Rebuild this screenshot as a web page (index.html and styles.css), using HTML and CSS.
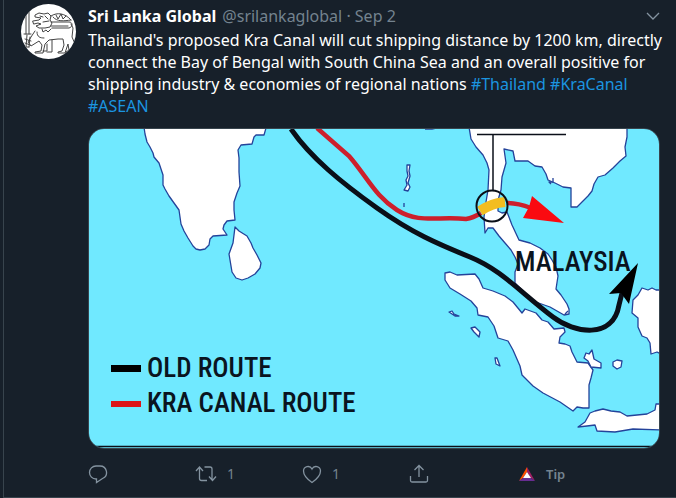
FILE: index.html
```html
<!DOCTYPE html>
<html lang="en">
<head>
<meta charset="utf-8">
<meta name="viewport" content="width=device-width, initial-scale=1">
<title>Sri Lanka Global</title>
<link rel="stylesheet" href="styles.css">
</head>
<body>
<article class="tweet">
  <a class="avatar" href="#" aria-label="Sri Lanka Global">
    <svg viewBox="0 0 55 55" fill="none" stroke="#444" stroke-width="1" stroke-linecap="round" stroke-linejoin="round">
      <path d="M5 8v22M8 8v22M3 30h7M6 31l-1 12M9 33l-1 10M4 35l6 2M4 39l5 2M5 43h3"/>
      <path d="M12 17l6-1 2-2-6-1 0-2 4-2 5 1 4-1 3 3-1 4 2 3-2 4-5 1-6 0-3-2 5-2-3-1-4 1zM19 12l3 1M24 12l3 3M22 18l6-1M21 25l1 3 3-2 2 2 3-3"/>
      <path d="M30 12c6-4 14-3 20 4M32 13c4 5 11 4 18 3M35 11l2 4 3-5 2 5 3-3M30 18h18c4 0 4 5 0 6H31M30 22h17"/>
      <path d="M14 27l-4 6-3 5 3 4 8-5 3 4-1 6-6 1v1h8l2-9 4-4 9-1 5 0 1 6-2 6-4 1v1h7l3-9 1 6-3 2v1h8l1-9-3-7 1-9-2-4M26 40v7h-4M31 36v12h-5M16 28c0 5 3 6 7 6"/>
    </svg>
  </a>
  <div class="body">
    <header class="head">
      <a class="name" href="#">Sri Lanka Global</a>
      <span class="meta">@srilankaglobal · <time>Sep 2</time></span>
      <button class="more" type="button" aria-label="More">
        <svg viewBox="0 0 14 8"><path d="M1 1l6 6 6-6"/></svg>
      </button>
    </header>
    <p class="text">Thailand's proposed Kra Canal will cut shipping distance by 1200 km, directly connect the Bay of Bengal with South China Sea and an overall positive for shipping industry &amp; economies of regional nations <a href="#">#Thailand</a> <a href="#">#KraCanal</a> <a href="#">#ASEAN</a></p>
    <figure class="media">
      <svg class="map" viewBox="89 129 570 319" role="img" aria-label="Map of the old route and the Kra Canal route">
        <g class="land">
          <path d="M144 127l1 7 2 8 3 5 3 6 1 4 5 6 2 6 2 6 0 10 2 4 4 7 5 7 5 7 1 7 1 7 3 7 4 7 5 8 3 3 4 1 5-1 4-4 1-6 3-3 14-1-4-6 1-4 3-4 8-1-1-10 0-8 3-9 3-7-1-14 0-14-1-8 3-5 11-1 2-7 2-2 8 0 2-7z"/>
          <path d="M235 227l4 4 8 5 4 7 2 5 4 7 4 8-1 5-5 6-7 4-6 2-6-2-4-6-3-18 4-11z"/>
          <path d="M469 127L471 139 476 147 483 155 487 163 489 170 488 190 486 202 484 217 485 233 488 228 493 228 499 236 505 243 511 250 515 257 518 264 515 272 515 283 521 289 527 296 533 301 550 307 564 315 569 314 569 309 567 304 561 295 556 289 558 276 556 267 552 260 548 254 540 248 530 243 519 240 512 225 507 212 502 213 498 211 498 200 501 190 502 177 506 163 504 149 513 151 515 161 528 161 535 166 542 167 546 174 548 180 555 183 563 187 571 188 571 207 577 207 583 201 588 196 592 191 594 184 598 177 605 175 613 168 620 161 626 156 625 147 627 137 627 127z"/>
          <path d="M553 178l0 4-4 0 2 2"/>
          <path d="M445 273L450 272 457 275 475 274 479 279 483 288 493 291 505 296 513 302 522 313 525 309 536 313 542 320 548 322 554 329 564 328 565 332 560 337 559 343 565 344 570 346 572 352 577 362 588 363 593 370 591 378 589 385 589 408 583 408 577 407 573 411 560 402 543 393 533 386 522 375 520 366 513 350 508 341 498 338 494 326 488 317 478 315 477 308 471 301 460 294 450 288 445 280z"/>
          <path d="M592 350l2 9 7 4 0 5-10-1-3-6-4-3 2-5 3 1z"/>
          <path d="M613 362l4-2 5 1-1 6-4 2-4-3z"/>
          <path d="M578 427l7-5 5-9 5-2 8-2 8 2 9 1 7 4 20-2 8-4 1-6h7v26l-30-1-18 3-18-1-2-6-8 1z"/>
          <path d="M663 290h-7l-4-2-4 2-6-2-4 7-5 5-1 13 6 5 0 9 4 9 5 2 3 5 1 11 6-2 6 3z"/>
          <path d="M449 312l3-1 2 3 5 2-4 0zM471 328l4-1 5 5-1 5-5-5zM495 358l2 0 3 8-4-2z"/>
          <path d="M407 165l3 0-1 6 1 5-2 7 2 4-2 4-4-1 3-5-1-5 2-4-1-5zM404 203v4M425 129l7 0 5-1M565 314l3-3"/>
        </g>
        <path class="ink" d="M477 134.500H566M493 134V191"/>
        <path class="route" d="M291 129C311 158 342 183 377 208S438 244 470 257 521 293 553 317C574 333 613 340 619 305L622 293"/>
        <path d="M638 263L609 294l12-1 8 11z"/>
        <path class="canal" d="M317 128L349 156C368 178 375 196 397 210S438 216 466 219Q473 218 481 213M507 203Q518 203 531 208"/>
        <path class="tip" d="M532 196l32 27-41-5 6-11z"/>
        <path class="strait" d="M480 211Q492 203 505 202"/>
        <circle class="ring" cx="492" cy="206" r="15.500"/>
        <path d="M111 365h30v7h-30z"/>
        <path class="tip legend" d="M111 401h30v6h-30z"/>
        <g class="label">
          <text x="515" y="271">MALAYSIA</text>
          <text x="147" y="377">OLD ROUTE</text>
          <text x="147" y="412">KRA CANAL ROUTE</text>
        </g>
        <path class="ink" d="M89 446.500H659"/>
      </svg>
    </figure>
    <footer class="actions">
      <button type="button" aria-label="Reply"><svg viewBox="0 0 20 20"><path d="M8 2h4a6.500 6.500 0 0 1 2.500 12.500L8.500 18.500V15H8A6.500 6.500 0 0 1 8 2z"/></svg></button>
      <button type="button" aria-label="Retweet"><svg class="wide" viewBox="0 0 22 20"><path d="M1 7l3.500-4L8 7M4.500 3v11.500q0 2 2 2H12M9.500 3H15q2 0 2 2V16M14 12.500l3.500 4 3.500-4"/></svg><span>1</span></button>
      <button type="button" aria-label="Like"><svg viewBox="0 0 20 20"><path d="M10 18.500C5 15 1.500 11 1.500 7A4.500 4.500 0 0 1 10 5a4.500 4.500 0 0 1 8.500 2c0 4-3.500 8-8.500 11.500z"/></svg><span>1</span></button>
      <button type="button" aria-label="Share"><svg viewBox="0 0 20 20"><path d="M1.500 12v4.500q0 1.500 1.500 1.500h14q1.500 0 1.500-1.500V12M10 13V2M5.500 6L10 1.500 14.500 6"/></svg></button>
      <button class="tipping" type="button"><svg class="bat" viewBox="0 0 18 16"><path fill="#ff5000" d="M9 1L1 15l4-3 4-6z"/><path fill="#9e1f63" d="M9 1l8 14-4-3-4-6z"/><path fill="#662d91" d="M1 15h16l-4-3H5z"/><path fill="#fff" d="M9 6l4 6H5z"/></svg><span>Tip</span></button>
    </footer>
  </div>
</article>
</body>
</html>
```
FILE: styles.css
```css
* {
  box-sizing: border-box;
}

body {
  margin: 0;
  background: #17202a;
  color: #fff;
  font: 16px/22px "Noto Sans", "Open Sans", sans-serif;
}

a {
  color: #1b95e0;
  text-decoration: none;
}

button {
  display: flex;
  align-items: center;
  padding: 0;
  border: 0;
  background: none;
  color: #74838f;
  font: inherit;
}

.tweet {
  display: flex;
  gap: 12px;
  margin-left: 3px;
  padding: 4px 16px 11px 17px;
  border-left: 1px solid #38444d;
  border-bottom: 1px solid #38444d;
}

.avatar {
  flex: none;
  width: 55px;
  height: 55px;
  border-radius: 50%;
  background: #fff;
  overflow: hidden;
}

.avatar svg {
  display: block;
}

.body {
  flex: 1;
  min-width: 0;
}

.head {
  display: flex;
  gap: 6px;
  height: 25px;
  line-height: 24px;
  white-space: nowrap;
}

.name {
  color: #fff;
  font-weight: 700;
}

.meta {
  color: #74838f;
}

.more {
  margin-left: auto;
  height: 24px;
}

.more svg {
  width: 14px;
  height: 8px;
}

.text {
  margin: 0 -8px 11px 0;
}

.media {
  margin: 0;
  border: 1px solid #38444d;
  border-radius: 16px;
  overflow: hidden;
}

.map {
  display: block;
  width: 100%;
  background: #70e9ff;
}

.land path {
  fill: #fff;
  stroke: #24439a;
  stroke-width: 1.3;
  stroke-linejoin: round;
}

.ink,
.ring,
.route,
.canal,
.strait {
  fill: none;
  stroke: #0a0f18;
}

.ink {
  stroke-width: 1.5;
}

.ring {
  stroke-width: 2;
}

.route {
  stroke-width: 5;
}

.canal {
  stroke: #cd1f2c;
  stroke-width: 4.5;
}

.strait {
  stroke: #f3bd20;
  stroke-width: 10;
}

.tip {
  fill: #fa0a10;
}

.legend {
  fill: #dc1417;
}

.label {
  fill: #0a1420;
  font: 500 27px "Roboto Condensed", "Open Sans Condensed", sans-serif;
}

.actions {
  display: grid;
  grid-template-columns: repeat(4, 107px) auto;
  margin-top: 13px;
  font-size: 14px;
}

.actions svg {
  width: 20px;
  height: 20px;
}

.actions .wide {
  width: 22px;
}

.actions button {
  gap: 10px;
  height: 24px;
}

.actions .bat {
  width: 18px;
  height: 16px;
}

.tipping {
  font-weight: 600;
}

.actions .tipping {
  padding-left: 2px;
  font-size: 13px;
}

button path:not([fill]) {
  fill: none;
  stroke: #8493a0;
  stroke-width: 1.3;
}
```
